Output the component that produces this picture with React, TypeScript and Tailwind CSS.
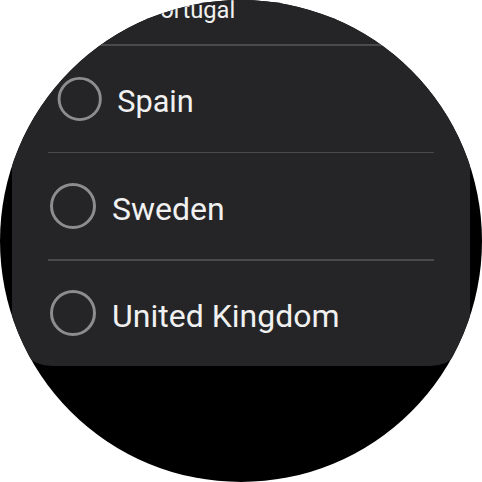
import React from 'react';

type RowProps = {
  label: string;
  scale: string;
  area: string;
};

function Radio() {
  return (
    <div className="ml-[2px] h-[46px] w-[46px] shrink-0 rounded-full border-[3px] border-[#8d8d8f]" />
  );
}

function Row({ label, scale, area }: RowProps) {
  return (
    <div className={`flex items-center justify-center ${area}`}>
      <div className={`flex w-[386px] shrink-0 items-center gap-4 ${scale}`}>
        <Radio />
        <span className="pt-[5px] text-[32px] leading-none text-[#f1f1f1]">{label}</span>
      </div>
    </div>
  );
}

function Divider({ width }: { width: string }) {
  return <div className={`mx-auto h-[1.5px] bg-[#4a4a4c] ${width}`} />;
}

export default function App() {
  return (
    <div
      className="h-[482px] w-[482px] bg-white"
      style={{ fontFamily: 'Roboto, "Open Sans", sans-serif' }}
    >
      <div className="h-[482px] w-[482px] overflow-hidden rounded-full bg-black">
        <div className="mx-auto w-[458px] overflow-hidden rounded-b-[40px] bg-[#252527]">
          <Row label="Portugal" scale="scale-[0.74]" area="h-[16px] mb-[28px]" />
          <Divider width="w-[290px]" />
          <Row label="Spain" scale="scale-[0.96]" area="h-[106px]" />
          <Divider width="w-[386px]" />
          <Row label="Sweden" scale="scale-100" area="h-[106px]" />
          <Divider width="w-[386px]" />
          <Row label="United Kingdom" scale="scale-100" area="h-[105px]" />
        </div>
      </div>
    </div>
  );
}
